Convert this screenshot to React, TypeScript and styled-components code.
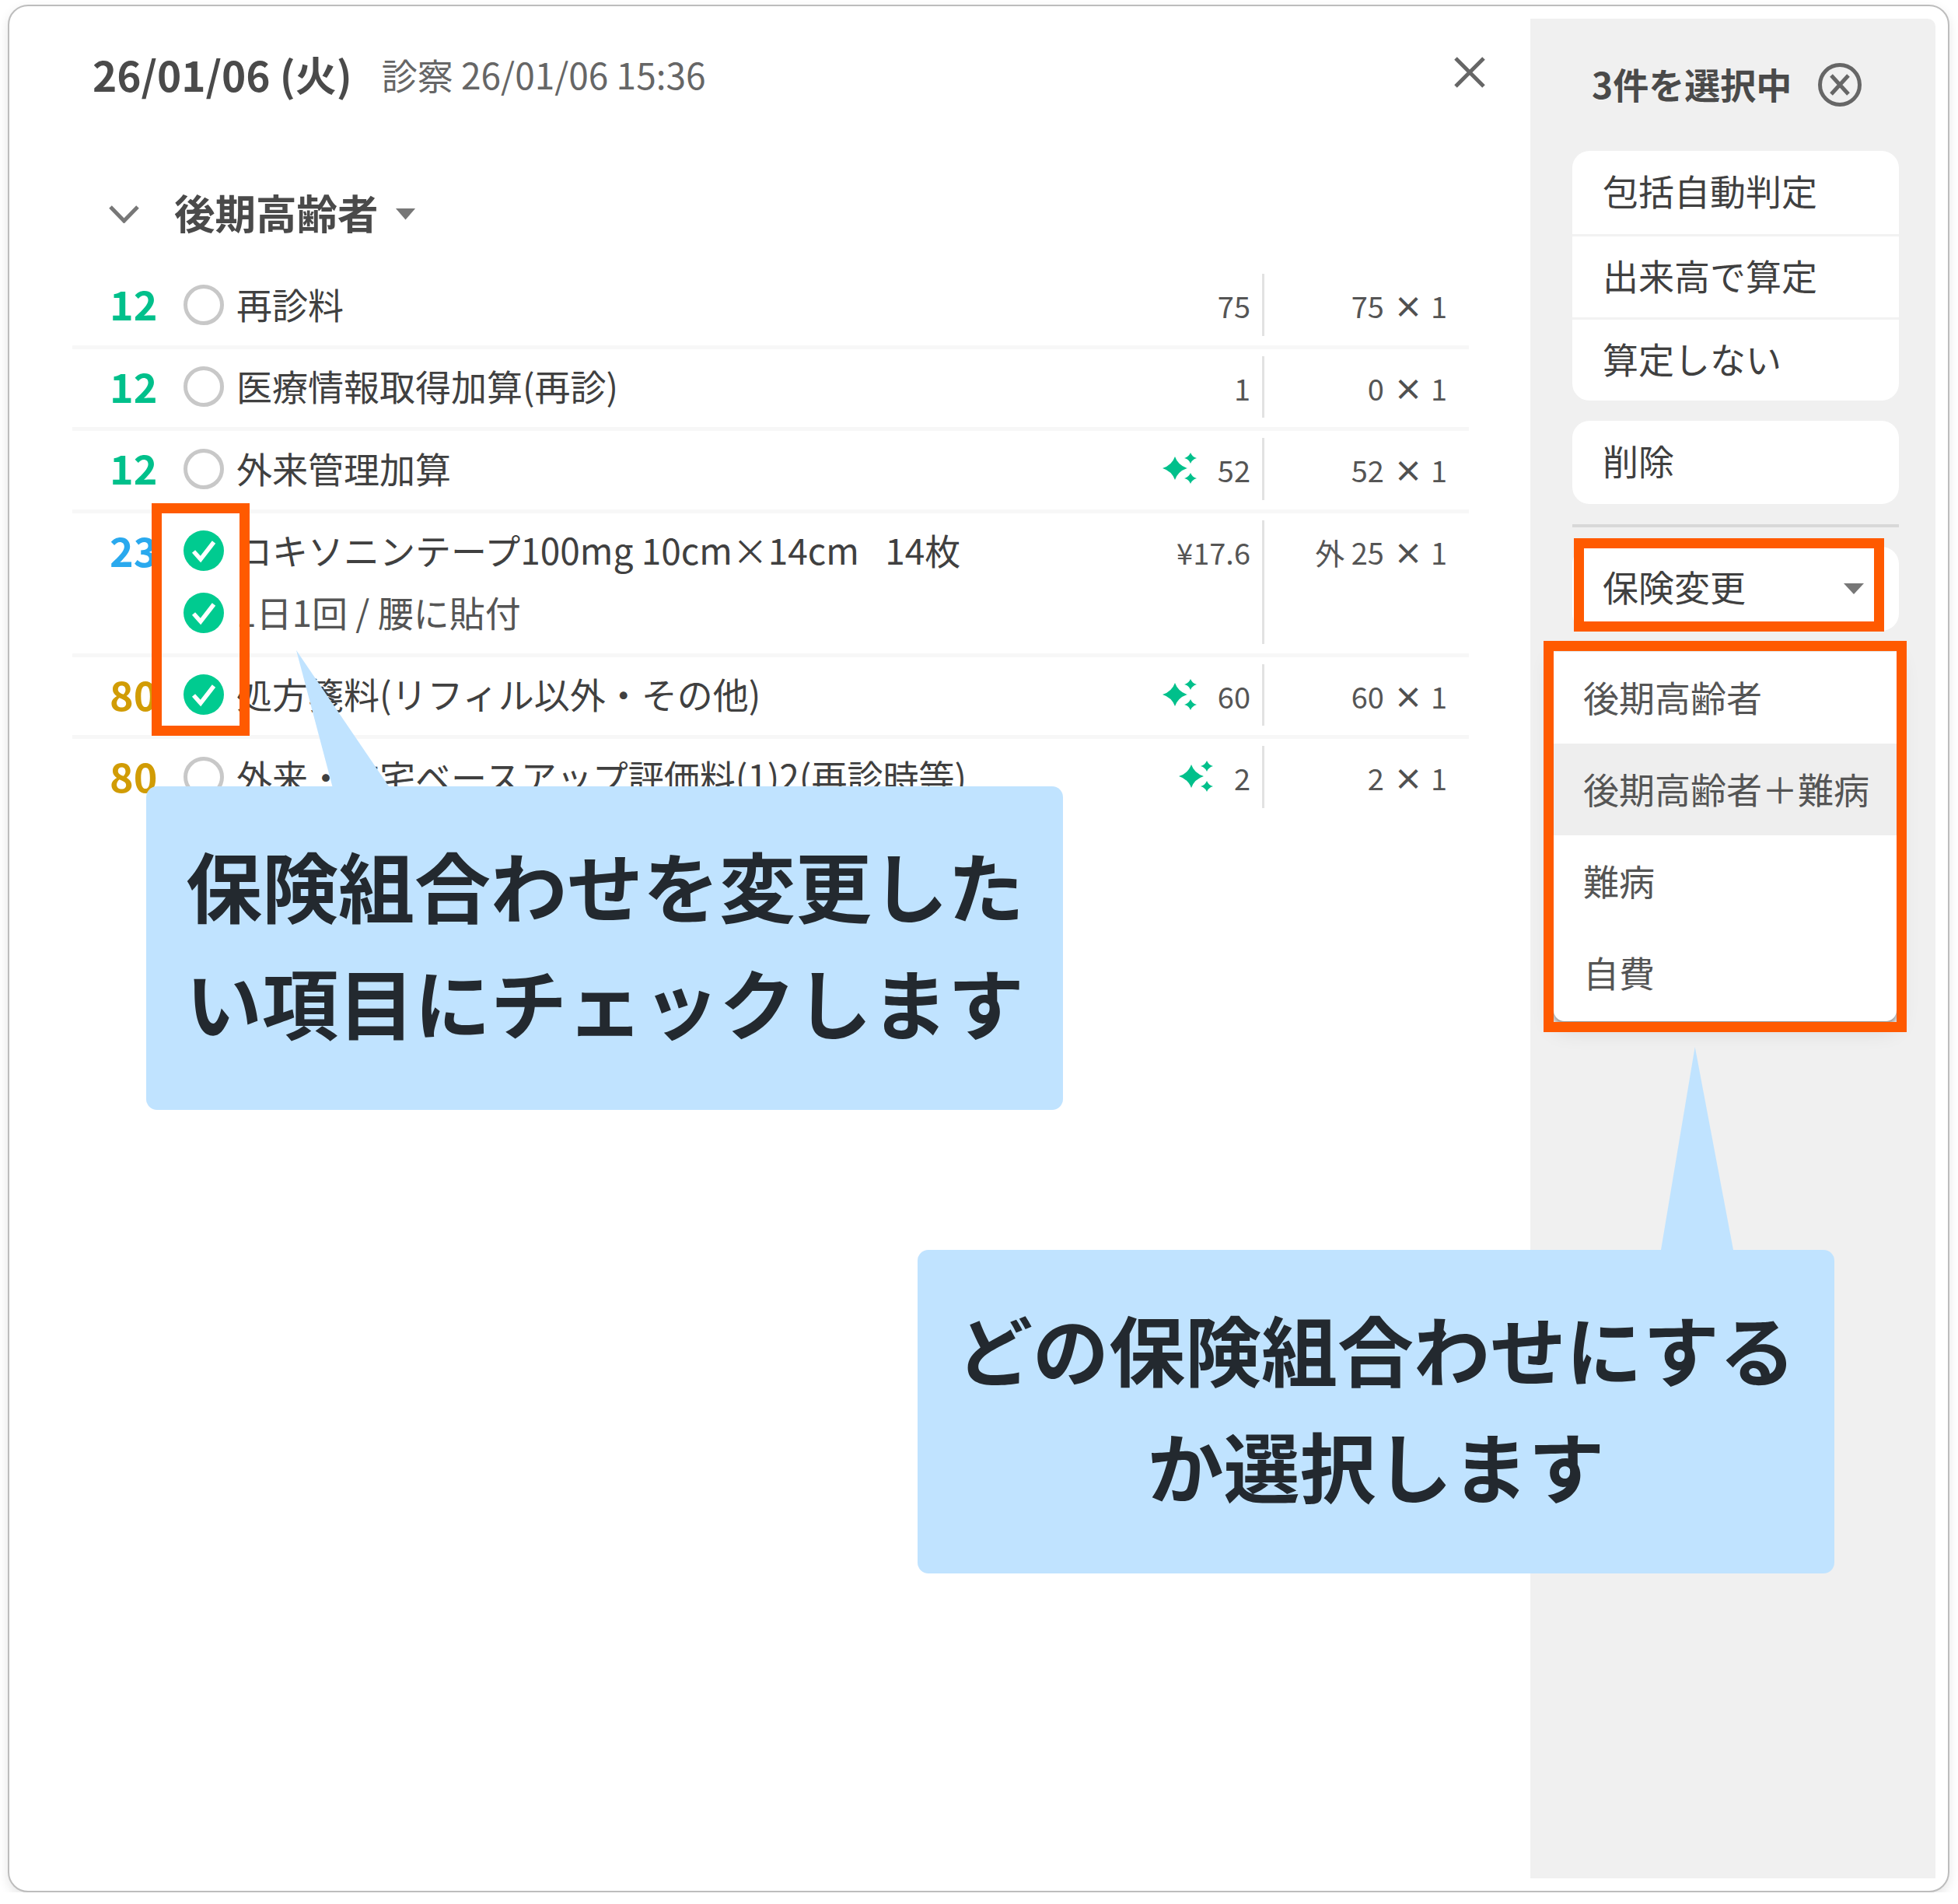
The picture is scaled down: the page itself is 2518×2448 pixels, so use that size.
import React from "react";
import styled, { createGlobalStyle } from "styled-components";

const GlobalStyle = createGlobalStyle`
    html, body {
        margin: 0;
        padding: 0;
        background: #ffffff;
    }
    body {
        font-family: "Noto Sans CJK JP", "Noto Sans", sans-serif;
        color: #444444;
    }
    * {
        box-sizing: border-box;
    }
`;

interface RowData {
    num: string;
    tone: string;
    lines: string[];
    checked: boolean;
    ai?: boolean;
    price: string;
    amount: string;
    last?: boolean;
}

const rows: RowData[] = [
    { num: "12", tone: "#00c08b", lines: ["再診料"], checked: false, price: "75", amount: "75" },
    { num: "12", tone: "#00c08b", lines: ["医療情報取得加算(再診)"], checked: false, price: "1", amount: "0" },
    { num: "12", tone: "#00c08b", lines: ["外来管理加算"], checked: false, ai: true, price: "52", amount: "52" },
    {
        num: "23",
        tone: "#2aa9ee",
        lines: ["ロキソニンテープ100mg 10cm×14cm\u2002 14枚", "1日1回 / 腰に貼付"],
        checked: true,
        price: "¥17.6",
        amount: "外 25",
    },
    { num: "80", tone: "#d19c05", lines: ["処方箋料(リフィル以外・その他)"], checked: true, ai: true, price: "60", amount: "60" },
    {
        num: "80",
        tone: "#d19c05",
        lines: ["外来・在宅ベースアップ評価料(1)2(再診時等)"],
        checked: false,
        ai: true,
        price: "2",
        amount: "2",
        last: true,
    },
];

const star = (cx: number, cy: number, rx: number, ry: number) => {
    const kx = rx * 0.25;
    const ky = ry * 0.25;
    return `M${cx - rx} ${cy}Q${cx - kx} ${cy - ky} ${cx} ${cy - ry}Q${cx + kx} ${cy - ky} ${cx + rx} ${cy}Q${cx + kx} ${cy + ky} ${cx} ${cy + ry}Q${cx - kx} ${cy + ky} ${cx - rx} ${cy}Z`;
};

const Sparkle = () => (
    <SparkleSvg viewBox="0 0 44 40" width={44} height={40}>
        <path d={star(16, 20, 16, 15)} fill="#00c08b" />
        <path d={star(36, 7, 8, 7)} fill="#00c08b" />
        <path d={star(36, 33, 8, 7)} fill="#00c08b" />
    </SparkleSvg>
);

const Radio: React.FC<{ checked: boolean }> = ({ checked }) => (
    <RadioSlot>
        {checked ? (
            <svg viewBox="0 0 52 52" width={52} height={52}>
                <circle cx="26" cy="26" r="26" fill="#00cb90" />
                <polyline points="13,27 22,37 39,15" fill="none" stroke="#ffffff" strokeWidth="5.5" />
            </svg>
        ) : (
            <EmptyRadio />
        )}
    </RadioSlot>
);

const App: React.FC = () => {
    return (
        <Frame>
            <GlobalStyle />
            <Main>
                <Header>
                    <TitleGroup>
                        <Title>26/01/06 (火)</Title>
                        <SubTitle>診察 26/01/06 15:36</SubTitle>
                    </TitleGroup>
                    <CloseIcon viewBox="0 0 40 40" width={40} height={40}>
                        <path d="M2 2L38 38M38 2L2 38" stroke="#666666" strokeWidth="5" fill="none" />
                    </CloseIcon>
                </Header>
                <GroupHeading>
                    <svg viewBox="0 0 39 23" width={39} height={23}>
                        <polyline points="2,2 19.5,20 37,2" fill="none" stroke="#777777" strokeWidth="5" />
                    </svg>
                    <GroupName>後期高齢者</GroupName>
                    <Caret $w={26} $h={15} />
                </GroupHeading>
                <List>
                    {rows.map((row, i) => (
                        <Row key={i} $last={row.last}>
                            <Num $tone={row.tone}>{row.num}</Num>
                            <Body>
                                {row.lines.map((line, j) => (
                                    <Line key={j}>
                                        <Radio checked={row.checked} />
                                        <Name $sub={j > 0}>{line}</Name>
                                    </Line>
                                ))}
                            </Body>
                            <Price>
                                {row.ai && <Sparkle />}
                                <PriceValue>{row.price}</PriceValue>
                            </Price>
                            <Amount>
                                {row.amount}
                                <Times>×</Times>1
                            </Amount>
                        </Row>
                    ))}
                </List>
            </Main>
            <Side>
                <SideHeading>
                    <SideTitle>3件を選択中</SideTitle>
                    <svg viewBox="0 0 56 56" width={56} height={56}>
                        <circle cx="28" cy="28" r="25.5" fill="none" stroke="#666666" strokeWidth="5" />
                        <path d="M17 16L39 40M39 16L17 40" stroke="#666666" strokeWidth="5" fill="none" />
                    </svg>
                </SideHeading>
                <MenuCard>
                    <MenuItem>包括自動判定</MenuItem>
                    <MenuItem>出来高で算定</MenuItem>
                    <MenuItem>算定しない</MenuItem>
                </MenuCard>
                <SingleCard>
                    <MenuItem>削除</MenuItem>
                </SingleCard>
                <SideRule />
                <SelectCard>
                    <SelectLabel>保険変更</SelectLabel>
                    <Caret $w={26} $h={14} />
                    <Dropdown>
                        <DropdownItem>後期高齢者</DropdownItem>
                        <DropdownItem $active>後期高齢者＋難病</DropdownItem>
                        <DropdownItem>難病</DropdownItem>
                        <DropdownItem>自費</DropdownItem>
                    </Dropdown>
                </SelectCard>
            </Side>
            <Highlight $left={183} $top={639} $width={126} $height={299} />
            <Highlight $left={2012} $top={684} $width={399} $height={120} />
            <Highlight $left={1973} $top={816} $width={467} $height={503} />
            <CalloutLeft>
                保険組合わせを変更した
                <br />
                い項目にチェックします
            </CalloutLeft>
            <CalloutRight>
                どの保険組合わせにする
                <br />
                か選択します
            </CalloutRight>
        </Frame>
    );
};

const Frame = styled.div`
    position: relative;
    display: flex;
    width: 2497px;
    height: 2427px;
    margin: 6px 0 0 10px;
    padding: 16px;
    background: #ffffff;
    border: 2px solid #bdbdbd;
    border-radius: 26px;
    box-shadow: 0 5px 14px rgba(0, 0, 0, 0.1);
`;

const Main = styled.div`
    flex: 1;
    min-width: 0;
    padding: 24px 79px 0 65px;
`;

const Header = styled.div`
    display: flex;
    align-items: center;
    justify-content: space-between;
    height: 100px;
    padding-left: 26px;
    margin-right: -21px;
`;

const TitleGroup = styled.div`
    display: flex;
    align-items: center;
    gap: 38px;
    padding-bottom: 6px;
`;

const Title = styled.div`
    font-size: 53px;
    font-weight: 700;
    color: #4a4a4a;
`;

const SubTitle = styled.div`
    font-size: 46px;
    font-weight: 400;
    color: #666666;
`;

const CloseIcon = styled.svg`
    margin-bottom: 10px;
`;

const GroupHeading = styled.div`
    display: flex;
    align-items: center;
    height: 70px;
    margin-top: 92px;
    margin-bottom: 33px;
    padding-left: 47px;
`;

const GroupName = styled.div`
    margin: 0 22px 7px 45px;
    font-size: 52.5px;
    font-weight: 700;
    color: #4a4a4a;
`;

const Caret = styled.i<{ $w: number; $h: number }>`
    display: block;
    width: ${(p) => p.$w}px;
    height: ${(p) => p.$h}px;
    background: #777777;
    clip-path: polygon(0 0, 100% 0, 50% 100%);
`;

const List = styled.div`
    display: flex;
    flex-direction: column;
`;

const Row = styled.div<{ $last?: boolean }>`
    display: flex;
    align-items: stretch;
    padding: 9px 28px 12px 48px;
    border-bottom: 5px solid ${(p) => (p.$last ? "transparent" : "#f7f7f7")};
`;

const Num = styled.div<{ $tone: string }>`
    flex: none;
    width: 95px;
    height: 79px;
    font-size: 52px;
    font-weight: 700;
    line-height: 76px;
    color: ${(p) => p.$tone};
`;

const Body = styled.div`
    flex: 1;
    min-width: 0;
    display: flex;
    flex-direction: column;
`;

const Line = styled.div`
    display: flex;
    align-items: center;
    height: 79.5px;
`;

const RadioSlot = styled.div`
    flex: none;
    display: flex;
    width: 52px;
    height: 52px;
    margin-right: 16px;
    background: #ffffff;
`;

const EmptyRadio = styled.div`
    width: 52px;
    height: 52px;
    border: 5px solid #c8c8c8;
    border-radius: 50%;
`;

const Name = styled.div<{ $sub: boolean }>`
    padding-bottom: 4px;
    font-size: 46px;
    white-space: nowrap;
    color: ${(p) => (p.$sub ? "#555555" : "#404040")};
`;

const SparkleSvg = styled.svg`
    margin: 19px 27px 0 0;
`;

const Price = styled.div`
    flex: none;
    display: flex;
    align-items: flex-start;
    justify-content: flex-end;
    padding-right: 15px;
    border-right: 3px solid #e2e2e2;
    font-size: 38px;
    color: #555555;
`;

const PriceValue = styled.span`
    display: block;
    height: 79px;
    line-height: 81px;
`;

const Amount = styled.div`
    flex: none;
    width: 235px;
    height: 79px;
    text-align: right;
    font-size: 38px;
    line-height: 81px;
    white-space: nowrap;
    color: #555555;
`;

const Times = styled.span`
    margin: 0 10px 0 12px;
    font-weight: 700;
    color: #505050;
`;

const Side = styled.div`
    flex: none;
    width: 521px;
    padding: 50px 47px 0 54px;
    background: #f0f0f0;
    border-radius: 0 10px 0 0;
`;

const SideHeading = styled.div`
    display: flex;
    align-items: center;
    gap: 34px;
    height: 70px;
    margin-bottom: 50px;
    padding-left: 25px;
`;

const SideTitle = styled.div`
    padding-bottom: 5px;
    font-size: 46px;
    font-weight: 700;
    color: #4a4a4a;
`;

const MenuCard = styled.div`
    background: #ffffff;
    border-radius: 22px;
    overflow: hidden;
`;

const SingleCard = styled(MenuCard)`
    margin-top: 26px;
`;

const MenuItem = styled.div`
    display: flex;
    align-items: center;
    height: 107px;
    padding: 0 0 7px 39px;
    font-size: 46px;
    color: #404040;

    & + & {
        border-top: 3px solid #f2f2f2;
    }
`;

const SideRule = styled.div`
    height: 4px;
    margin-top: 26px;
    background: #d8d8d8;
`;

const SelectCard = styled.div`
    position: relative;
    display: flex;
    align-items: center;
    justify-content: space-between;
    height: 108px;
    margin-top: 25px;
    padding: 0 45px 0 39px;
    background: #ffffff;
    border-radius: 22px;
    font-size: 46px;
    color: #404040;
`;

const SelectLabel = styled.span`
    padding-bottom: 9px;
`;

const Dropdown = styled.div`
    position: absolute;
    top: 135px;
    left: -24px;
    width: 441px;
    padding-bottom: 3px;
    background: #ffffff;
    border-radius: 0 0 14px 14px;
    box-shadow: 0 4px 6px rgba(0, 0, 0, 0.35), 0 10px 30px rgba(0, 0, 0, 0.12);
`;

const DropdownItem = styled.div<{ $active?: boolean }>`
    display: flex;
    align-items: center;
    height: 118px;
    padding: 0 0 4px 38px;
    font-size: 46px;
    white-space: nowrap;
    color: #555555;
    background: ${(p) => (p.$active ? "#eeeeee" : "transparent")};
`;

const Highlight = styled.div<{ $left: number; $top: number; $width: number; $height: number }>`
    position: absolute;
    left: ${(p) => p.$left}px;
    top: ${(p) => p.$top}px;
    width: ${(p) => p.$width}px;
    height: ${(p) => p.$height}px;
    border: 13px solid #ff5a00;
`;

const Callout = styled.div`
    position: absolute;
    display: block;
    width: 1179px;
    height: 416px;
    background: #c0e3ff;
    border-radius: 14px;
    font-size: 98px;
    font-weight: 700;
    line-height: 150px;
    white-space: nowrap;
    color: #23292f;

    &::before {
        content: "";
        position: absolute;
        background: #c0e3ff;
    }
`;

const CalloutLeft = styled(Callout)`
    left: 176px;
    top: 1003px;
    padding: 50px 0 0 51px;

    &::before {
        left: 193px;
        bottom: 100%;
        width: 119px;
        height: 175px;
        clip-path: polygon(0 0, 39% 100%, 100% 100%);
    }
`;

const CalloutRight = styled(Callout)`
    left: 1168px;
    top: 1599px;
    padding-top: 50px;
    text-align: center;

    &::before {
        left: 956px;
        bottom: 100%;
        width: 93px;
        height: 261px;
        clip-path: polygon(47% 0, 0 100%, 100% 100%);
    }
`;

export default App;
